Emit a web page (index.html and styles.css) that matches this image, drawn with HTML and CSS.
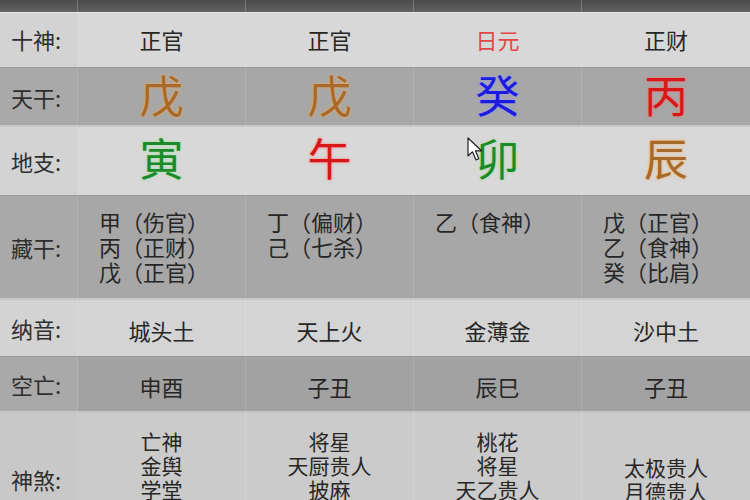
FILE: index.html
```html
<!DOCTYPE html>
<html lang="zh-CN">
<head>
<meta charset="utf-8">
<title>八字排盘</title>
<link rel="stylesheet" href="styles.css">
</head>
<body>
<div class="chart">
  <div class="row head">
    <div class="cell"></div><div class="cell"></div><div class="cell"></div><div class="cell"></div><div class="cell"></div>
  </div>
  <div class="row light r-shishen">
    <div class="label">十神:</div>
    <div class="cell">正官</div>
    <div class="cell">正官</div>
    <div class="cell rizhu">日元</div>
    <div class="cell">正财</div>
  </div>
  <div class="row dark r-gan">
    <div class="label">天干:</div>
    <div class="cell big earth">戊</div>
    <div class="cell big earth">戊</div>
    <div class="cell big water">癸</div>
    <div class="cell big fire">丙</div>
  </div>
  <div class="row light r-zhi">
    <div class="label">地支:</div>
    <div class="cell big wood">寅</div>
    <div class="cell big fire">午</div>
    <div class="cell big wood">卯</div>
    <div class="cell big earth">辰</div>
  </div>
  <div class="row dark r-cang">
    <div class="label">藏干:</div>
    <div class="cell stack left"><span>甲（伤官）</span><span>丙（正财）</span><span>戊（正官）</span></div>
    <div class="cell stack left"><span>丁（偏财）</span><span>己（七杀）</span></div>
    <div class="cell stack left"><span>乙（食神）</span></div>
    <div class="cell stack left"><span>戊（正官）</span><span>乙（食神）</span><span>癸（比肩）</span></div>
  </div>
  <div class="row light r-nayin">
    <div class="label">纳音:</div>
    <div class="cell">城头土</div>
    <div class="cell">天上火</div>
    <div class="cell">金薄金</div>
    <div class="cell">沙中土</div>
  </div>
  <div class="row dark r-kong">
    <div class="label">空亡:</div>
    <div class="cell">申酉</div>
    <div class="cell">子丑</div>
    <div class="cell">辰巳</div>
    <div class="cell">子丑</div>
  </div>
  <div class="row light bottom r-sha">
    <div class="label">神煞:</div>
    <div class="cell stack"><span>亡神</span><span>金舆</span><span>学堂</span></div>
    <div class="cell stack"><span>将星</span><span>天厨贵人</span><span>披麻</span></div>
    <div class="cell stack"><span>桃花</span><span>将星</span><span>天乙贵人</span></div>
    <div class="cell stack lower"><span>太极贵人</span><span>月德贵人</span></div>
  </div>
  <svg class="cursor" width="16" height="25" viewBox="0 0 16 25" aria-hidden="true">
    <path d="M1 1 L1 19 L5.5 14.8 L9 23 L11.8 21.8 L8.4 13.8 L14.5 13.8 Z" fill="#fff" stroke="#222" stroke-width="1.2" stroke-linejoin="round"/>
  </svg>
</div>
</body>
</html>
```
FILE: styles.css
```css
* { box-sizing: border-box; }
html, body { margin: 0; padding: 0; }
body {
  width: 750px;
  height: 500px;
  overflow: hidden;
  background: #cfcfcf;
  font-family: "Noto Sans CJK SC", "Noto Sans", sans-serif;
  color: #262626;
}
.chart {
  position: relative;
  width: 750px;
}
.row {
  display: grid;
  grid-template-columns: 78px repeat(4, 1fr);
  align-items: center;
}
.row > div {
  height: 100%;
  display: flex;
  align-items: center;
  justify-content: center;
  border-right: 1px solid rgba(255, 255, 255, 0.12);
}
.row > div:last-child { border-right: none; }
.head {
  height: 12px;
  background: linear-gradient(#4a4a4a, #626262);
}
.head > div { border-right: 1px solid #7a7a7a; }
.light {
  background: #d8d8d8;
  border-bottom: 1px solid #9a9a9a;
}
.dark {
  background: #a7a7a7;
  border-bottom: 2px solid #c6c6c6;
}
.light .label { background: #d3d3d3; }
.dark .label { background: #a9a9a9; }
.label {
  font-size: 22px;
  color: #2e2e2e;
  justify-content: flex-start !important;
  padding-left: 11px;
}
.cell { font-size: 22px; }
.r-shishen { height: 56px; border-top: 1px solid #e6e6e6; }
.r-shishen > div { padding-bottom: 3px; }
.r-gan { height: 59px; }
.r-zhi { height: 69px; }
.r-cang { height: 104px; }
.r-nayin { height: 57px; }
.r-kong { height: 56px; }
.r-sha { height: 132px; background: #cbcbcb; border-bottom: none; }
.r-sha .label { background: #c8c8c8; }
.r-kong { background: #a2a2a2; }
.r-nayin { background: #d4d4d4; }
.r-nayin .cell, .r-kong .cell { padding-top: 3px; }
.rizhu { color: #e04848; }
.big {
  font-size: 44px;
  line-height: 1;
}
.r-gan .big { padding-bottom: 5px; }
.r-zhi .big { padding-bottom: 8px; }
.earth { color: #a86a28; text-shadow: 0 0 3px rgba(255, 170, 80, 0.9); }
.water { color: #1c1ce0; text-shadow: 0 0 3px rgba(150, 150, 255, 0.9); }
.fire { color: #d81818; text-shadow: 0 0 3px rgba(255, 110, 110, 0.9); }
.wood { color: #1d8a2a; text-shadow: 0 0 3px rgba(140, 230, 140, 0.8); }
.stack {
  flex-direction: column;
  justify-content: flex-start !important;
  align-items: center !important;
  line-height: 24px;
  font-size: 21px;
}
.stack.left {
  align-items: flex-start !important;
  padding-left: 21px;
  padding-top: 13px;
  line-height: 25px;
  font-size: 22px;
}
.r-sha .stack { padding-top: 16px; }
.r-sha .stack.lower { padding-top: 42px; }
.cursor {
  position: absolute;
  left: 467px;
  top: 137px;
}
```
